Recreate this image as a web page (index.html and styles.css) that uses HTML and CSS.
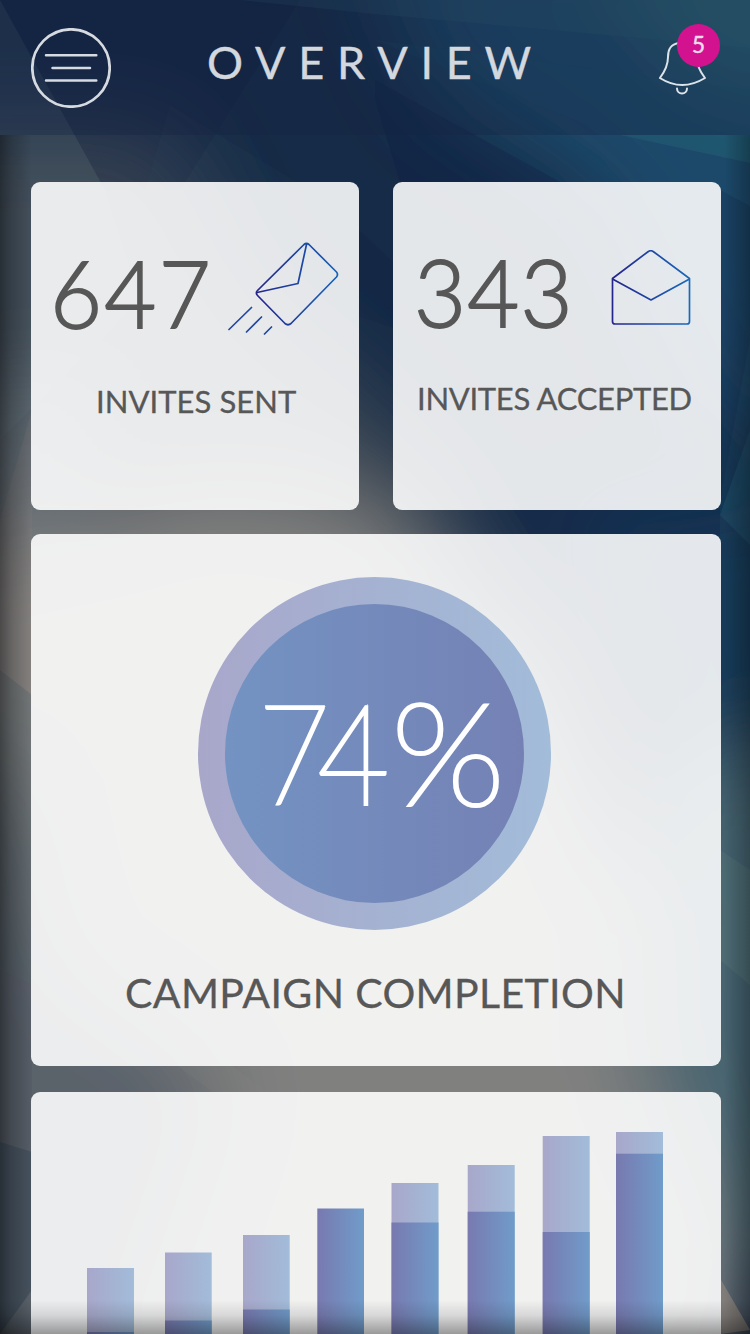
FILE: index.html
```html
<!DOCTYPE html>
<html lang="en">
<head>
<meta charset="utf-8">
<title>Overview</title>
<link rel="stylesheet" href="styles.css">
</head>
<body>
<div class="screen">
  <svg class="backdrop" viewBox="0 0 750 1334" preserveAspectRatio="none" aria-hidden="true">
    <defs>
      <filter id="soft" x="-50%" y="-50%" width="200%" height="200%"><feGaussianBlur stdDeviation="44"/></filter>
      <linearGradient id="edgeL"><stop offset="0" stop-color="#000" stop-opacity=".42"/><stop offset=".35" stop-color="#000" stop-opacity=".22"/><stop offset="1" stop-color="#000" stop-opacity="0"/></linearGradient>
      <linearGradient id="edgeR"><stop offset="0" stop-color="#000" stop-opacity="0"/><stop offset="1" stop-color="#000" stop-opacity=".28"/></linearGradient>
    </defs>
    <rect width="750" height="1334" fill="#162b47"/>
    <g filter="url(#soft)">
      <polygon points="360,-80 850,-80 850,480 700,420 600,200 430,90" fill="#1c486a"/>
      <polygon points="560,-80 850,-80 850,100 700,80" fill="#2b6272"/>
      <polygon points="-80,130 160,130 250,300 370,400 500,540 -80,540" fill="#3c4a55"/>
      <polygon points="-80,400 100,380 100,620 -80,620" fill="#606a72"/>
      <polygon points="-80,560 100,520 180,480 320,490 400,530 540,660 640,900 700,1150 750,1400 -80,1400" fill="#80807f"/>
      <polygon points="560,500 850,480 850,780 700,780" fill="#193b59"/>
      <polygon points="650,760 850,740 850,1250 740,1300 640,1050" fill="#45646f"/>
      <polygon points="-80,760 20,780 60,960 230,1080 120,1400 -80,1400" fill="#5a626b"/>
    </g>
    <polygon points="0,0 105,190 140,300 0,440" fill="#72808c" opacity=".13"/>
    <polygon points="0,0 300,0 180,190 105,190" fill="#0e1740" opacity=".14"/>
    <polygon points="375,80 560,182 720,182 400,182 375,100" fill="#0b1740" opacity=".25"/>
    <polygon points="170,105 145,190 310,190" fill="#4b6070" opacity=".06"/>
    <polygon points="375,14 750,48 750,0 240,0" fill="#39707a" opacity=".17"/>
    <polygon points="375,40 750,90 750,160 600,130" fill="#1a5267" opacity=".2"/>
    <polygon points="620,135 750,135 750,163" fill="#348088" opacity=".2"/>
    <polygon points="359,230 393,262 393,328 359,316" fill="#0d2040" opacity=".2"/>
    <polygon points="720,190 750,206 750,340 720,500" fill="#0d2545" opacity=".2"/>
    <polygon points="720,515 750,430 750,545" fill="#286176" opacity=".3"/>
    <polygon points="0,520 32,410 32,695 0,670" fill="#97887e" opacity=".15"/>
    <polygon points="0,670 32,695 32,985 0,970" fill="#41535f" opacity=".2"/>
    <polygon points="0,970 32,985 32,1152 0,1142" fill="#4c4f60" opacity=".25"/>
    <polygon points="0,1142 32,1152 32,1290 0,1334" fill="#273b50" opacity=".4"/>
    <polygon points="175,1064 230,1064 270,1094 215,1094" fill="#8b8a80" opacity=".12"/>
    <polygon points="512,508 720,508 720,536 530,536" fill="#10264a" opacity=".35"/>
    <polygon points="720,850 750,870 750,985 720,960" fill="#6b8584" opacity=".2"/>
    <polygon points="720,1278 750,1330 720,1334" fill="#807c79"/>
    <rect y="135" width="32" height="1199" fill="url(#edgeL)"/>
    <rect x="724" y="135" width="26" height="1199" fill="url(#edgeR)"/>
  </svg>

  <header class="topbar">
    <button class="menu" aria-label="Menu">
      <svg width="80" height="80" viewBox="0 0 80 80" fill="none" stroke="#d6dae1" stroke-linecap="round">
        <circle cx="40" cy="40" r="38.7" stroke-width="2.7"/>
        <path d="M15 27.200H65.300M21.500 40H59M15 52.500H65.300" stroke-width="2.500"/>
      </svg>
    </button>
    <h1 class="title">OVERVIEW</h1>
    <div class="alerts">
      <svg width="64" height="72" viewBox="0.500 0 64 72" fill="none" stroke="#dce3e9" stroke-width="2" stroke-linecap="round" stroke-linejoin="round">
        <path d="M21 19C12 20.500 10.500 26.500 10.500 33C10.500 42 7 48 2.400 54Q24.500 68 47.500 54C42 47 39.500 41 39.500 34"/>
        <path d="M19.500 64.500A5 5 0 0 0 29.500 64.500"/>
      </svg>
      <span class="badge">5</span>
    </div>
  </header>

  <main class="content">
    <div class="pair">
      <section class="card stat sent">
        <div class="figure">
          <span class="number">647</span>
          <svg class="flying" width="114" height="96" viewBox="0 0 114 96" fill="none" stroke-width="1.700" stroke-linecap="round" stroke-linejoin="round">
            <defs><linearGradient id="ink" gradientUnits="userSpaceOnUse" x1="28" y1="0" x2="111" y2="0"><stop offset="0" stop-color="#25238c"/><stop offset="1" stop-color="#1664b8"/></linearGradient></defs>
            <g stroke="url(#ink)">
              <path d="M77 2.500Q79.500 .5 82 2.500L109.500 30Q111.500 32.500 109.500 35L64 81.500Q61 84 58 81.500L31 54Q28 51 30.500 48.500Z"/>
              <path d="M30 50.500L71 41.500L79.500 2.500"/>
            </g>
            <path d="M2 87.500L24.500 65.500M19.500 90L34.500 75M37.500 92L44.500 85" stroke="#24479f"/>
          </svg>
        </div>
        <p class="label">INVITES SENT</p>
      </section>
      <section class="card stat accepted">
        <div class="figure">
          <span class="number">343</span>
          <svg class="open" width="80" height="76" viewBox="0 0 80 76" fill="none" stroke="url(#ink2)" stroke-width="1.700" stroke-linejoin="round">
            <defs><linearGradient id="ink2" gradientUnits="userSpaceOnUse" x1="0" y1="0" x2="80" y2="0"><stop offset="0" stop-color="#25238c"/><stop offset="1" stop-color="#1a6abb"/></linearGradient></defs>
            <path d="M1.500 28.500L37 1.700Q39.800 -.3 42.500 1.700L78.500 28.500V71.500Q78.500 74 76 74H4Q1.500 74 1.500 71.500Z"/>
            <path d="M1.500 29L40 50L78.500 29"/>
          </svg>
        </div>
        <p class="label">INVITES ACCEPTED</p>
      </section>
    </div>

    <section class="card campaign">
      <div class="ring"><div class="disc"><div class="percent"><span class="digits">74</span><span class="sign">%</span></div></div></div>
      <h2 class="heading">CAMPAIGN COMPLETION</h2>
    </section>

    <section class="card chart">
      <svg width="690" height="242" viewBox="31 1092 690 242">
        <defs>
          <linearGradient id="pale"><stop offset="0" stop-color="#a8a7ca"/><stop offset="1" stop-color="#a2bcd9"/></linearGradient>
          <linearGradient id="deep"><stop offset="0" stop-color="#7879af"/><stop offset="1" stop-color="#709cca"/></linearGradient>
        </defs>
        <g fill="url(#pale)">
          <rect x="87" y="1268" width="47" height="70"/><rect x="165" y="1252.500" width="46.700" height="90"/>
          <rect x="243" y="1235" width="46.700" height="100"/><rect x="391.500" y="1183" width="47" height="155"/>
          <rect x="467.700" y="1165" width="47" height="175"/><rect x="542.700" y="1136" width="47" height="200"/>
          <rect x="616" y="1132" width="47" height="205"/>
        </g>
        <g fill="url(#deep)">
          <rect x="87" y="1332" width="47" height="10"/><rect x="165" y="1320.500" width="46.700" height="20"/>
          <rect x="243" y="1309.500" width="46.700" height="30"/><rect x="317.300" y="1208.500" width="46.700" height="130"/>
          <rect x="391.500" y="1222.500" width="47" height="115"/><rect x="467.700" y="1211.700" width="47" height="125"/>
          <rect x="542.700" y="1232" width="47" height="105"/><rect x="616" y="1153.700" width="47" height="184"/>
        </g>
      </svg>
    </section>
  </main>
  <div class="fade"></div>
</div>
</body>
</html>
```
FILE: styles.css
```css
* { box-sizing: border-box; margin: 0; padding: 0; }
body { margin: 0; font-family: Lato, "Open Sans", sans-serif; color: #575757; }
svg { display: block; }
.screen { position: relative; width: 750px; height: 1334px; overflow: hidden; background: #162b47; isolation: isolate; }
.backdrop { position: absolute; inset: 0; width: 750px; height: 1334px; z-index: -1; }

.topbar { display: flex; height: 135px; padding: 28px 0 0 31px; background: rgba(22, 34, 64, .32); }
.menu { width: 80px; height: 80px; border: 0; background: none; }
.title { width: 364px; margin-left: 96px; padding-top: 7px; font-size: 45px; line-height: 54px; font-weight: 400; letter-spacing: 12.8px; color: #d3d8de; -webkit-text-stroke: .4px #d3d8de; white-space: nowrap; }
.alerts { position: relative; width: 64px; height: 72px; margin-left: 87px; margin-top: -4px; }
.badge { position: absolute; left: 19px; top: 0; width: 43px; height: 43px; border-radius: 50%; background: #d3128f; color: #ecdcea; font-size: 22.5px; line-height: 42px; text-align: center; -webkit-text-stroke: .5px #ecdcea; }

.content { display: flex; flex-direction: column; padding: 47px 29px 0 31px; }
.card { border-radius: 9px; background: rgba(255, 255, 255, .885); }
.pair { display: flex; justify-content: space-between; margin-bottom: 24px; }
.stat { width: 328px; height: 328px; }
.figure { display: flex; }
.number { font-size: 93px; line-height: 100px; font-weight: 300; white-space: nowrap; transform: scaleX(.965); transform-origin: left; -webkit-text-stroke: 1.8px #575757; }
.sent .figure { height: 199px; padding: 60px 0 0 19px; }
.sent .number { width: 177px; letter-spacing: 2.4px; }
.accepted .figure { height: 196px; padding: 60px 0 0 21px; }
.accepted .number { width: 197px; letter-spacing: 1.3px; margin-top: -1px; }
.open { margin-top: 8px; }
.label { font-size: 31px; line-height: 40px; white-space: nowrap; -webkit-text-stroke: .3px #575757; }
.sent .label { padding-left: 65px; letter-spacing: .05px; }
.accepted .label { padding-left: 24px; letter-spacing: -.3px; }

.campaign { height: 532px; margin-bottom: 26px; padding: 43px 0 0 167px; }
.ring { width: 353px; height: 353px; padding: 27px; border-radius: 50%; background: linear-gradient(90deg, #a8a7ca, #a2bcd9); }
.disc { width: 299px; height: 299px; padding: 63px 0 0 32px; border-radius: 50%; background: linear-gradient(90deg, #7393c2, #7581b5); }
.percent { display: flex; color: #fff; font-size: 139px; line-height: 168px; font-weight: 100; -webkit-text-stroke: 3.6px #fff; }
.digits { width: 134px; letter-spacing: -13.6px; transform: scaleX(.89); transform-origin: left; padding-left: 1px; }
.sign { transform: scale(1.08, 1.02); transform-origin: left; }
.heading { margin: 37px 0 0 -73px; font-size: 41px; line-height: 52px; font-weight: 400; letter-spacing: .38px; -webkit-text-stroke: .3px #575757; white-space: nowrap; }
.chart { height: 270px; }
.fade { position: absolute; left: 0; bottom: 0; width: 100%; height: 34px; background: linear-gradient(rgba(0,0,0,0), rgba(0,0,0,.1) 45%, rgba(0,0,0,.36)); }
```
